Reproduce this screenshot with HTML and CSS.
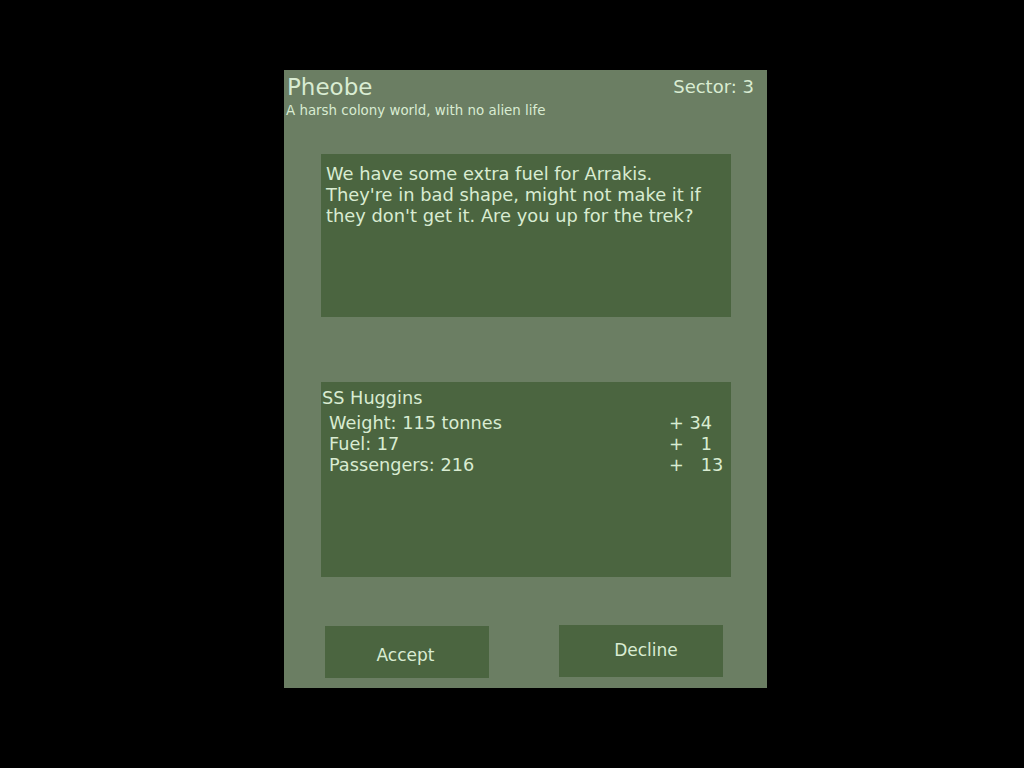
FILE: index.html
```html
<!DOCTYPE html>
<html lang="en">
<head>
    <meta charset="UTF-8">
    <meta name="viewport" content="width=device-width, initial-scale=1.0">
    <title>Pheobe</title>
    <link rel="stylesheet" href="styles.css">
</head>
<body>
    <div class="panel">
        <div class="header">
            <div>
                <div class="planet">Pheobe</div>
                <div class="desc">A harsh colony world, with no alien life</div>
            </div>
            <div class="sector">Sector: 3</div>
        </div>

        <div class="box message">
            We have some extra fuel for Arrakis.<br>
            They're in bad shape, might not make it if<br>
            they don't get it. Are you up for the trek?
        </div>

        <div class="box ship">
            <div class="ship-name">SS Huggins</div>
            <div class="stats">
                <div class="stat">
                    <span>Weight: 115 tonnes</span>
                    <span class="delta">+ 34</span>
                </div>
                <div class="stat">
                    <span>Fuel: 17</span>
                    <span class="delta">+   1</span>
                </div>
                <div class="stat">
                    <span>Passengers: 216</span>
                    <span class="delta">+   13</span>
                </div>
            </div>
        </div>

        <div class="buttons">
            <button class="btn accept">Accept</button>
            <button class="btn decline">Decline</button>
        </div>
    </div>
</body>
</html>
```

FILE: styles.css
```css
body{
    margin: 0;
    background-color: #000;
    font-family: "DejaVu Sans", sans-serif;
    color: #d9ecd2;
}

.panel{
    margin: 70px 0 0 284px;
    width: 483px;
    height: 618px;
    background-color: #6b7e63;
    display: flex;
    flex-direction: column;
}

.header{
    display: flex;
    justify-content: space-between;
    height: 47px;
    padding: 3px 13px 0 2px;
    box-sizing: border-box;
}

.planet{
    font-size: 23px;
    line-height: 29px;
    padding-left: 1px;
}

.desc{
    font-size: 13.4px;
    margin-top: 1px;
}

.sector{
    font-size: 18px;
    margin-top: 3px;
}

.box{
    background-color: #4b6540;
    width: 410px;
    margin-left: 37px;
    box-sizing: border-box;
    font-size: 17.7px;
    line-height: 21px;
}

.message{
    margin-top: 37px;
    height: 163px;
    padding: 9px 5px 0;
    font-size: 17.85px;
}

.ship{
    margin-top: 65px;
    height: 195px;
    padding: 6px 8px 0 1px;
}

.stats{
    margin-top: 4px;
    padding-left: 7px;
}

.stat{
    display: flex;
    justify-content: space-between;
}

.delta{
    white-space: pre;
    width: 54px;
}

.buttons{
    display: flex;
    align-items: flex-start;
    justify-content: space-between;
    padding: 0 44px 0 41px;
    margin-top: auto;
    margin-bottom: 10px;
}

.btn{
    width: 164px;
    height: 52px;
    border: none;
    background-color: #4b6540;
    color: #d9ecd2;
    font-family: "DejaVu Sans", sans-serif;
    font-size: 17px;
    box-sizing: border-box;
}

.accept{
    margin-top: 1px;
    padding: 6px 3px 0 0;
}

.decline{
    padding: 0 0 2px 10px;
}
```
